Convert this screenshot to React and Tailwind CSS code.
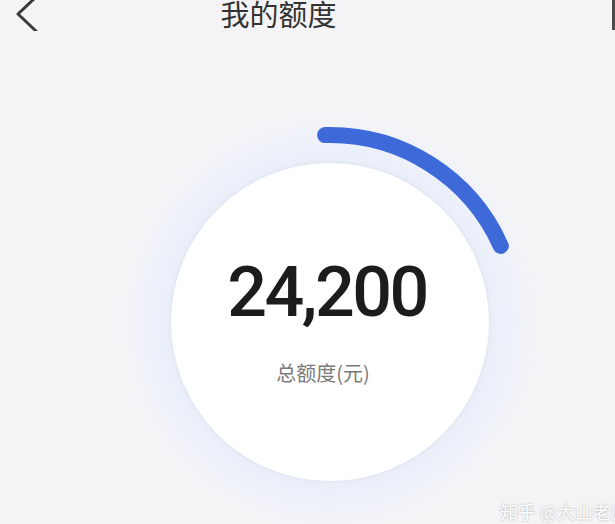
import React from "react";

const cjk = { fontFamily: '"Noto Sans CJK SC", "Noto Sans", sans-serif' };

const Header = () => (
	<div className="flex h-[32px] mt-[-3px] items-start justify-between">
		{/* back chevron */}
		<svg width="44" height="34" viewBox="0 0 44 34" className="shrink-0">
			<polyline
				points="35,1 18,17 36,34"
				fill="none"
				stroke="#3a3a3a"
				strokeWidth="3"
				strokeLinecap="round"
				strokeLinejoin="round"
			/>
		</svg>
		<div className="flex-1 flex justify-center pr-[99px]">
			<span className="mt-[2px] text-[29px] leading-none text-[#333]" style={cjk}>
				我的额度
			</span>
		</div>
		<div className="w-[3px] h-[30px] mt-[3px] bg-[#4a4a4a] shrink-0" />
	</div>
);

const Gauge = ({ amount, label }) => (
	<div className="relative w-[420px] h-[420px] ml-[120px] mt-[83px] rounded-full flex items-center justify-center bg-[radial-gradient(circle_closest-side,#e8edf9_74%,#edf1fa_86%,#f4f4f6_100%)]">
		<div className="w-[318px] h-[318px] rounded-full bg-white shadow-[0_0_5px_rgba(0,0,0,0.06)] flex flex-col items-center pt-[94px]">
			<div
				className="text-[70px] leading-none font-medium tracking-[-2.5px] text-[#1c1c1c] pr-[6px]"
				style={{ fontFamily: "Roboto, sans-serif" }}
			>
				{amount}
			</div>
			<div className="mt-[36px] text-[20px] leading-none text-[#7a7a7a] pr-[14px]" style={cjk}>
				{label}
			</div>
		</div>
		{/* progress arc */}
		<svg
			className="absolute inset-0"
			width="420"
			height="420"
			viewBox="0 0 420 420"
		>
			<path
				d="M205.1 23.1 A187 187 0 0 1 380.8 133.9"
				fill="none"
				stroke="#3e69d9"
				strokeWidth="16"
				strokeLinecap="round"
			/>
		</svg>
	</div>
);

export default function App() {
	return (
		<div className="relative w-[615px] h-[524px] overflow-hidden bg-[#f4f4f6]">
			<Header />
			<Gauge amount="24,200" label="总额度(元)" />
			<div
				className="absolute top-[502px] left-[500px] whitespace-nowrap text-[18px] leading-none text-white [text-shadow:0_0_2px_rgba(0,0,0,0.35)]"
				style={cjk}
			>
				知乎 @大山老师
			</div>
		</div>
	);
}
